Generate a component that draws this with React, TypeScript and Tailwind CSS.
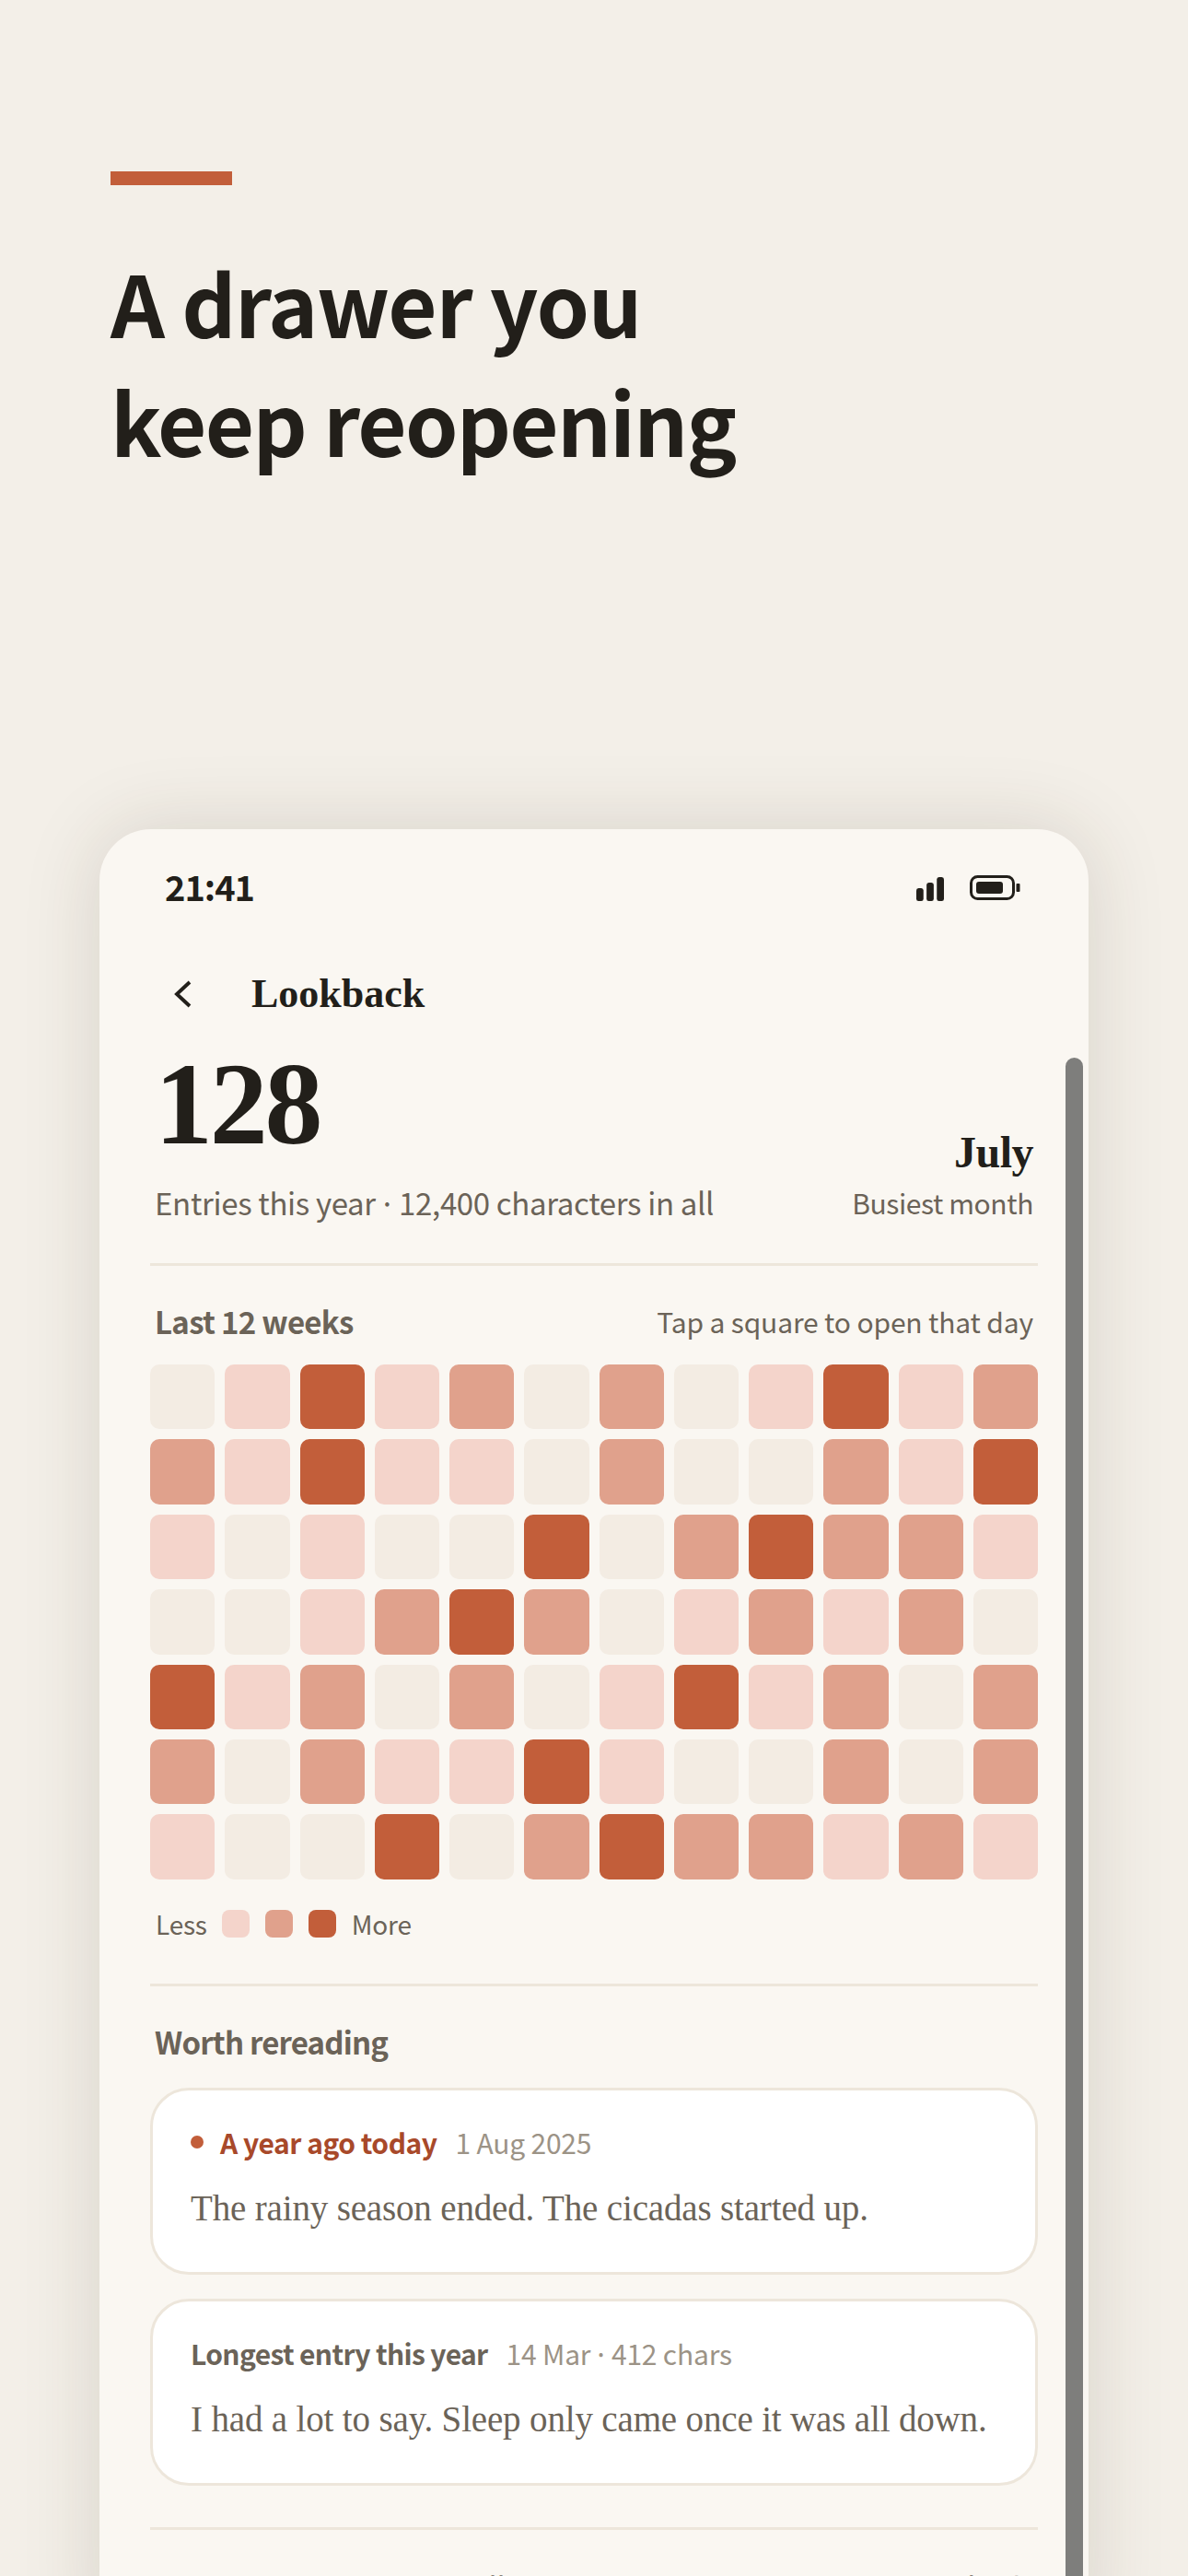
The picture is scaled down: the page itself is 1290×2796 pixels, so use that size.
const sans = "font-['Noto_Sans_CJK_JP','Noto_Sans',sans-serif]";
const serif = "font-['Liberation_Serif',serif]";

const weeks = [
  [0, 1, 3, 1, 2, 0, 2, 0, 1, 3, 1, 2],
  [2, 1, 3, 1, 1, 0, 2, 0, 0, 2, 1, 3],
  [1, 0, 1, 0, 0, 3, 0, 2, 3, 2, 2, 1],
  [0, 0, 1, 2, 3, 2, 0, 1, 2, 1, 2, 0],
  [3, 1, 2, 0, 2, 0, 1, 3, 1, 2, 0, 2],
  [2, 0, 2, 1, 1, 3, 1, 0, 0, 2, 0, 2],
  [1, 0, 0, 3, 0, 2, 3, 2, 2, 1, 2, 1],
];

const shades = ["bg-[#f3ece3]", "bg-[#f4d4cb]", "bg-[#e0a18c]", "bg-[#c25e3a]"];

const Divider = ({ className }: { className: string }) => (
  <div className={`mx-[55px] h-[3px] bg-[#ede6db] ${className}`} />
);

// the middle dot sits tighter than the font's own advance
const Dot = () => <span className="mx-[-3.5px]">·</span>;

const StatusBar = () => (
  <div className="flex h-[48px] items-center justify-between pl-[71px] pr-[74px]">
    <span className="mb-[4px] text-[38px] leading-[48px] font-bold tracking-[-1px] text-[#221f1a]">21:41</span>
    <div className="flex items-center gap-[28px]">
      <svg width="30" height="26" viewBox="0 0 31 26" className="mt-[1px]" fill="#221f1a" preserveAspectRatio="none">
        <rect x="0" y="12" width="8" height="14" rx="2.5" />
        <rect x="11.5" y="6" width="8" height="20" rx="2.5" />
        <rect x="23" y="0" width="8" height="26" rx="2.5" />
      </svg>
      <svg width="55" height="27" viewBox="0 0 55 27" fill="none" className="-mt-[1px]">
        <rect x="1.5" y="1.5" width="46" height="24" rx="7" stroke="#221f1a" strokeWidth="3" />
        <rect x="7" y="7" width="29" height="13" rx="3" fill="#221f1a" />
        <rect x="50.5" y="9" width="4" height="9" rx="1" fill="#221f1a" />
      </svg>
    </div>
  </div>
);

const EntryCard = ({
  label,
  date,
  body,
  labelClass,
  dot,
  className,
}: {
  label: string;
  date: React.ReactNode;
  body: string;
  labelClass: string;
  dot?: boolean;
  className?: string;
}) => (
  <div className={`mx-[55px] h-[203px] rounded-[42px] border-[3px] border-[#ede6db] bg-white pl-[41px] pt-[34px] ${className ?? ""}`}>
    <div className="flex items-center text-[30px] leading-[44px]">
      {dot && <span className="mr-[18px] h-[14px] w-[14px] rounded-full bg-[#c25e3a]" />}
      <span className={`font-semibold ${labelClass}`}>{label}</span>
      <span className="ml-[20px] tracking-[-0.2px] text-[#9c9386]">{date}</span>
    </div>
    <p className={`${serif} mt-[20px] text-[39px] leading-[60px] tracking-[-0.16px] text-[#6b6358]`}>{body}</p>
  </div>
);

export default function App() {
  return (
    <div className={`${sans} h-[2796px] w-[1290px] overflow-hidden bg-[#f3efe8] pt-[186px]`}>
      <div className="ml-[120px] h-[15px] w-[132px] bg-[#c25e3a]" />
      <h1 className="ml-[120px] mt-[61px] text-[92px] leading-[129px] font-bold text-[#221f1a]">
        <span className="tracking-[-1.35px]">A drawer you</span>
        <br />
        <span className="tracking-[-1.78px]">keep reopening</span>
      </h1>

      <div className="relative ml-[108px] mt-[380px] h-[1960px] w-[1074px] overflow-hidden rounded-t-[56px] bg-[#faf7f2] pt-[40px] shadow-[0_0_84px_rgba(60,50,30,0.15)]">
        <div className="absolute bottom-0 left-[1049px] top-[248px] w-[19px] rounded-t-[10px] bg-[#7e7e7c]" />

        <StatusBar />

        <div className="mt-[67px] flex h-[48px] items-center pl-[66px]">
          <svg width="48" height="48" viewBox="0 0 48 48" fill="none">
            <polyline points="32,11 18,24 32,37" stroke="#221f1a" strokeWidth="3.9" />
          </svg>
          <span className={`${serif} ml-[51px] text-[44px] leading-[48px] font-bold text-[#221f1a]`}>Lookback</span>
        </div>

        <div className="mt-[33px] flex items-end justify-between pl-[60px] pr-[60px]">
          <div>
            <div className={`${serif} text-[126px] leading-[126px] font-bold tracking-[-3.3px] text-[#221f1a]`}>128</div>
            <div className="mt-[19px] text-[33px] leading-[48px] tracking-[-0.34px] text-[#6b6358]">
              Entries this year <Dot /> 12,400 characters in all
            </div>
          </div>
          <div className="text-right">
            <div className={`${serif} text-[48px] leading-[60px] font-bold tracking-[-0.5px] text-[#221f1a]`}>July</div>
            <div className="text-[30px] leading-[48px] tracking-[-0.4px] text-[#6b6358]">Busiest month</div>
          </div>
        </div>

        <Divider className="mt-[42px]" />

        <div className="mt-[36px] flex items-center justify-between pl-[60px] pr-[60px] leading-[48px] text-[#6b6358]">
          <span className="text-[33px] font-semibold tracking-[-0.7px]">Last 12 weeks</span>
          <span className="text-[30px] tracking-[-0.15px]">Tap a square to open that day</span>
        </div>

        <div className="mx-[55px] mt-[23px] grid grid-cols-12 gap-x-[11px] gap-y-[11px]">
          {weeks.flat().map((level, i) => (
            <div key={i} className={`h-[70.4px] rounded-[10px] ${shades[level]}`} />
          ))}
        </div>

        <div className="mt-[24px] flex h-[48px] items-center pl-[61px] text-[28px] tracking-[-0.2px] text-[#6b6358]">
          <span>Less</span>
          <span className="ml-[16px] h-[30px] w-[30px] rounded-[8px] bg-[#f4d4cb]" />
          <span className="ml-[17px] h-[30px] w-[30px] rounded-[8px] bg-[#e0a18c]" />
          <span className="ml-[17px] h-[30px] w-[30px] rounded-[8px] bg-[#c25e3a]" />
          <span className="ml-[17px]">More</span>
        </div>

        <Divider className="mt-[41px]" />

        <div className="mt-[36px] pl-[60px] text-[33px] leading-[48px] font-semibold tracking-[-0.8px] text-[#6b6358]">Worth rereading</div>

        <EntryCard
          dot
          className="mt-[26px]"
          label="A year ago today"
          labelClass="tracking-[-0.5px] text-[#a8492a]"
          date="1 Aug 2025"
          body="The rainy season ended. The cicadas started up."
        />
        <EntryCard
          className="mt-[26px]"
          label="Longest entry this year"
          labelClass="tracking-[-0.65px] text-[#6b6358]"
          date={
            <>
              14 Mar <Dot /> 412 chars
            </>
          }
          body="I had a lot to say. Sleep only came once it was all down."
        />

        <Divider className="mt-[45px]" />

        <p className="mt-[38px] whitespace-nowrap pl-[60px] text-[33px] leading-[48px] tracking-[-0.2px] text-[#6b6358]">
          Your words add up; small days turn out to be the ones you look back on.
        </p>
      </div>
    </div>
  );
}
